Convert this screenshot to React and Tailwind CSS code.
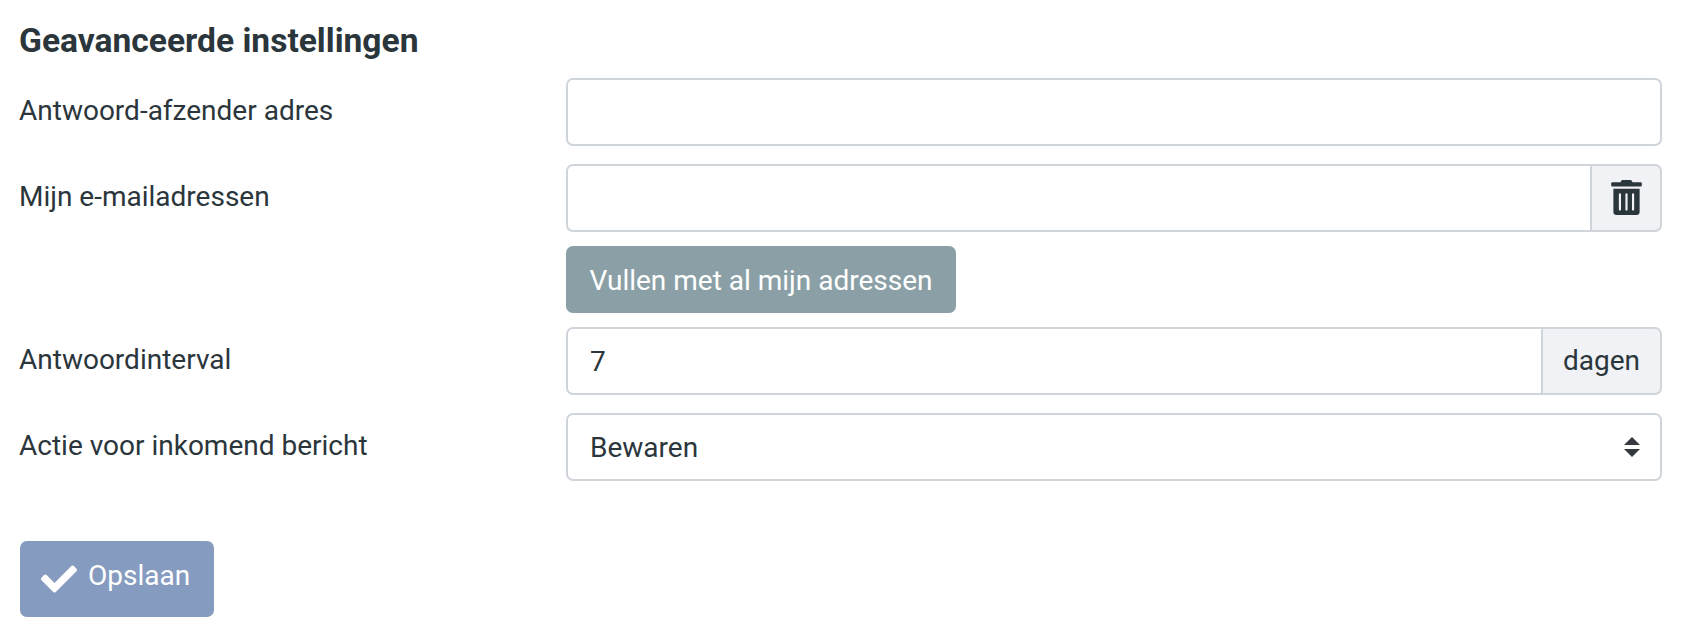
import { FaCheck, FaTrashAlt } from 'react-icons/fa'

function Label({ children }) {
  return <label className="w-[547px] shrink-0 pt-[14px] text-[28px] leading-[38px] text-[#2b363c]">{children}</label>
}

const inputClass =
  'h-[68px] w-full min-w-0 border-2 border-[#cfd5db] bg-white px-[22px] text-[28px] text-[#2b363c] outline-none'

export default function App() {
  return (
    <div className="h-[630px] w-[1690px] overflow-hidden bg-white pl-[19px] pr-7 font-['Roboto',sans-serif] text-[#2b363c]">
      <h4 className="pt-[22px] pb-[18px] text-[33.6px] font-bold leading-[38px]">Geavanceerde instellingen</h4>

      <div className="flex flex-col">
        {/* Antwoord-afzender */}
        <div className="flex">
          <Label>Antwoord-afzender adres</Label>
          <input type="text" className={inputClass + ' rounded-[7px]'} />
        </div>

        {/* E-mailadressen */}
        <div className="mt-[18px] flex">
          <Label>Mijn e-mailadressen</Label>
          <div className="flex flex-1 flex-col items-start">
            <div className="flex w-full">
              <input type="text" className={inputClass + ' rounded-l-[7px]'} />
              <div className="-ml-0.5 flex h-[68px] w-[72px] shrink-0 items-center justify-center rounded-r-[7px] border-2 border-[#cfd5db] bg-[#f1f2f5]">
                <FaTrashAlt className="mt-[-1px] h-[35px] w-[31px] text-[#2b363c]" />
              </div>
            </div>
            <button className="mt-[14px] h-[67px] rounded-[7px] bg-[#8b9fa6] px-[23.5px] pt-0.5 text-[28px] text-white">
              Vullen met al mijn adressen
            </button>
          </div>
        </div>

        {/* Antwoordinterval */}
        <div className="mt-[14px] flex">
          <Label>Antwoordinterval</Label>
          <div className="flex flex-1">
            <input type="text" defaultValue="7" className={inputClass + ' rounded-l-[7px]'} />
            <div className="-ml-0.5 flex h-[68px] shrink-0 items-center rounded-r-[7px] border-2 border-[#cfd5db] bg-[#f1f2f5] px-5 text-[28px]">
              dagen
            </div>
          </div>
        </div>

        {/* Actie */}
        <div className="mt-[18px] flex">
          <Label>Actie voor inkomend bericht</Label>
          <div className="relative flex-1">
            <select className={inputClass + ' appearance-none rounded-[7px] pt-0.5'}>
              <option>Bewaren</option>
            </select>
            <svg viewBox="0 0 16 20" className="pointer-events-none absolute right-[22px] top-[24px] h-[20px] w-[16px] text-[#343a40]">
              <polygon points="8,0 16,8 0,8" fill="currentColor" />
              <polygon points="0,12 16,12 8,20" fill="currentColor" />
            </svg>
          </div>
        </div>
      </div>

      <button className="mt-[60px] ml-px flex h-[76px] w-[194px] items-center gap-[11px] rounded-[7px] bg-[#869bc0] pl-[21px] text-[28px] text-white">
        <FaCheck className="h-[36px] w-[36px]" />
        <span className="pb-1.5">Opslaan</span>
      </button>
    </div>
  )
}
